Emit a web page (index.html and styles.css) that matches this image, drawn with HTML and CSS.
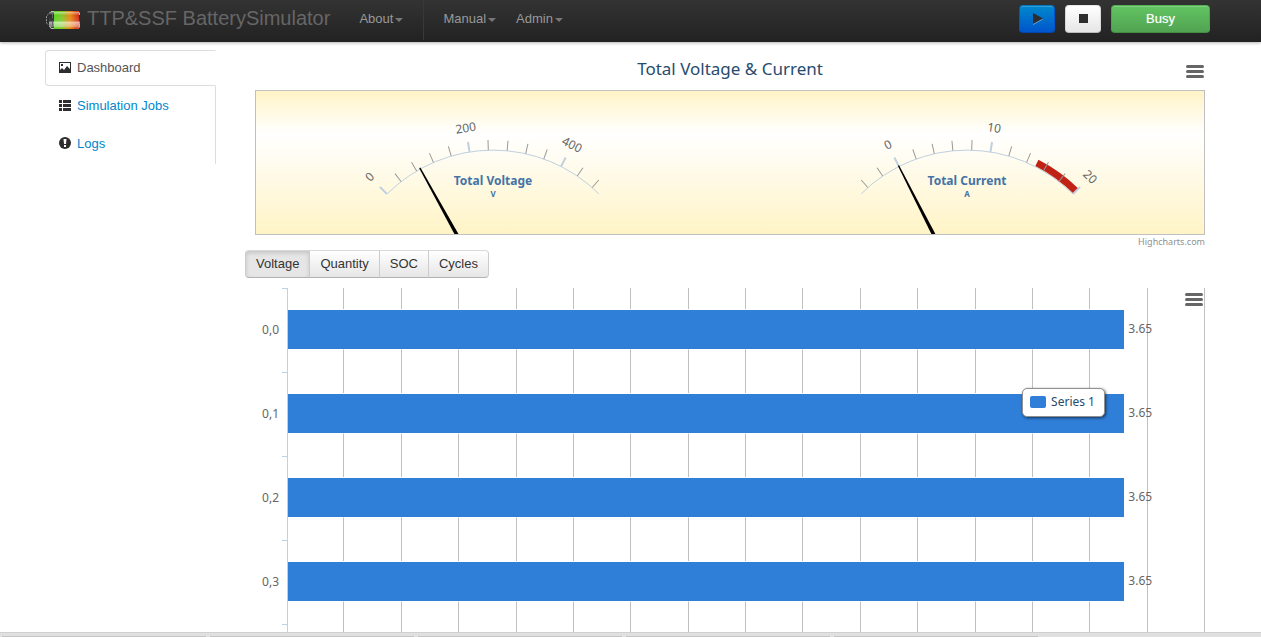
FILE: index.html
```html
<!DOCTYPE html>
<html lang="en">
<head>
<meta charset="utf-8">
<title>TTP&amp;SSF BatterySimulator</title>
<link rel="stylesheet" href="styles.css">
</head>
<body>
<header class="navbar">
  <a class="brand" href="#">
    <svg class="battery" width="36" height="22" viewBox="0 0 36 22" aria-hidden="true">
      <defs>
        <linearGradient id="charge"><stop offset="0" stop-color="#58d322"/><stop offset=".3" stop-color="#7fc928"/><stop offset=".65" stop-color="#e88a17"/><stop offset="1" stop-color="#d32a18"/></linearGradient>
        <linearGradient id="gloss" x2="0" y2="1"><stop offset="0" stop-color="#fff" stop-opacity=".5"/><stop offset=".2" stop-color="#fff" stop-opacity="0"/><stop offset=".55" stop-color="#fff" stop-opacity=".1"/><stop offset=".65" stop-color="#fff" stop-opacity=".6"/><stop offset=".9" stop-color="#fff" stop-opacity=".4"/><stop offset="1" stop-color="#fff" stop-opacity="0"/></linearGradient>
      </defs>
      <rect x="4" y="2" width="31" height="18" rx="3" fill="#292929"/>
      <rect x="9" y="2" width="25" height="18" fill="url(#charge)"/>
      <rect x="4" y="3" width="31" height="16" rx="2" fill="url(#gloss)"/>
      <path d="M3.500 5L1.500 7V14L3.500 16" fill="none" stroke="#999" stroke-dasharray="2 1"/>
      <path d="M9 2.500H6L4.500 4M4.500 17L6 19.500H9M33 2.500L34.500 4V6M34.500 15V18L33 19.500" fill="none" stroke="#bbb"/>
      <path d="M7.500 5V9M7.500 12V17" stroke="#666"/>
    </svg>
    <span>TTP&amp;SSF BatterySimulator</span>
  </a>
  <nav class="menu">
    <a href="#">About<i class="caret"></i></a>
    <span class="divider"></span>
    <a href="#">Manual<i class="caret"></i></a>
    <a href="#">Admin<i class="caret"></i></a>
  </nav>
  <div class="actions">
    <button class="btn play" aria-label="Play"><svg width="12" height="14" viewBox="0 0 12 14"><path d="M2 2L12 7.500L2 13Z" fill="#62a5e8"/><path d="M2 1L12 6.500L2 12Z" fill="#2d2d2d"/></svg></button>
    <button class="btn stop" aria-label="Stop"><svg width="10" height="10"><path d="M1 0H10V9H1Z" fill="#2d2d2d"/></svg></button>
    <button class="btn busy">Busy</button>
  </div>
</header>

<div class="page">
  <nav class="tabs">
    <a class="active" href="#"><svg width="14" height="14" viewBox="0 0 14 14"><path fill="#2d2d2d" fill-rule="evenodd" d="M1 1H13V12H1ZM2 2V9L4 7L6 9L9 5L12 8V2ZM3 3H5V5H3Z"/></svg>Dashboard</a>
    <a href="#"><svg width="14" height="14" viewBox="0 0 14 14"><path fill="#2d2d2d" d="M1 1H4V4H1ZM5 1H13V4H5ZM1 5H4V8H1ZM5 5H13V8H5ZM1 9H4V12H1ZM5 9H13V12H5Z"/></svg>Simulation Jobs</a>
    <a href="#"><svg width="14" height="14" viewBox="0 0 14 14"><circle cx="7" cy="6" r="6" fill="#2d2d2d"/><path fill="#fff" d="M5.500 2H8.500L8 7H6ZM6 8H8V10H6Z"/></svg>Logs</a>
  </nav>

  <main class="content">
    <section class="gauges">
      <div class="heading">
        <h1>Total Voltage &amp; Current</h1>
        <button class="export" aria-label="Chart menu"><i></i><i></i><i></i></button>
      </div>
      <div class="pane">
        <svg class="gauge" width="300" height="143" viewBox="-150 -209 300 143" role="img" aria-label="Total Voltage gauge">
          <path class="arc" d="M-106 -106A150 150 0 0 1 106 -106"/>
          <g class="minor">
            <path transform="rotate(-37.8)" d="M0 -150V-160"/><path transform="rotate(-30.6)" d="M0 -150V-160"/><path transform="rotate(-23.4)" d="M0 -150V-160"/><path transform="rotate(-16.2)" d="M0 -150V-160"/><path transform="rotate(-1.8)" d="M0 -150V-160"/><path transform="rotate(5.4)" d="M0 -150V-160"/><path transform="rotate(12.6)" d="M0 -150V-160"/><path transform="rotate(19.8)" d="M0 -150V-160"/><path transform="rotate(34.2)" d="M0 -150V-160"/><path transform="rotate(41.4)" d="M0 -150V-160"/>
          </g>
          <g class="major">
            <path transform="rotate(-45)" d="M0 -150V-160"/><path transform="rotate(-9)" d="M0 -150V-160"/><path transform="rotate(27)" d="M0 -150V-160"/>
          </g>
          <g class="scale">
            <text transform="rotate(-45)" y="-170">0</text><text transform="rotate(-9)" y="-170">200</text><text transform="rotate(27)" y="-170">400</text>
          </g>
          <text class="name" y="-115">Total Voltage</text>
          <text class="unit" y="-103">V</text>
          <path transform="rotate(-29)" d="M-2 0L-2 -60L-.7 -151H.7L2 -60V0Z"/>
        </svg>
        <svg class="gauge" width="300" height="143" viewBox="-150 -209 300 143" role="img" aria-label="Total Current gauge">
          <path class="arc" d="M-106 -106A150 150 0 0 1 106 -106"/>
          <path class="band" d="M69.900 -137.200A154 154 0 0 1 108.900 -108.900"/>
          <g class="minor">
            <path transform="rotate(-41.4)" d="M0 -150V-160"/><path transform="rotate(-34.2)" d="M0 -150V-160"/><path transform="rotate(-19.8)" d="M0 -150V-160"/><path transform="rotate(-12.6)" d="M0 -150V-160"/><path transform="rotate(-5.4)" d="M0 -150V-160"/><path transform="rotate(1.8)" d="M0 -150V-160"/><path transform="rotate(16.2)" d="M0 -150V-160"/><path transform="rotate(23.4)" d="M0 -150V-160"/><path transform="rotate(30.6)" d="M0 -150V-160"/><path transform="rotate(37.8)" d="M0 -150V-160"/>
          </g>
          <g class="major">
            <path transform="rotate(-27)" d="M0 -150V-160"/><path transform="rotate(9)" d="M0 -150V-160"/><path transform="rotate(45)" d="M0 -150V-160"/>
          </g>
          <g class="scale">
            <text transform="rotate(-27)" y="-170">0</text><text transform="rotate(9)" y="-170">10</text><text transform="rotate(45)" y="-170">20</text>
          </g>
          <text class="name" y="-115">Total Current</text>
          <text class="unit" y="-103">A</text>
          <path transform="rotate(-27)" d="M-2 0L-2 -60L-.7 -151H.7L2 -60V0Z"/>
        </svg>
      </div>
      <a class="credits" href="#">Highcharts.com</a>
    </section>

    <div class="btn-group">
      <button class="on">Voltage</button><button>Quantity</button><button>SOC</button><button>Cycles</button>
    </div>

    <section class="bars">
      <div class="grid"><i></i><i></i><i></i><i></i><i></i><i></i><i></i><i></i><i></i><i></i><i></i><i></i><i></i><i></i><i></i><i></i></div>
      <div class="row"><span class="cat">0,0</span><div class="plot"><div class="bar"></div><span>3.65</span></div></div>
      <div class="row"><span class="cat">0,1</span><div class="plot"><div class="bar"></div><span>3.65</span></div></div>
      <div class="row"><span class="cat">0,2</span><div class="plot"><div class="bar"></div><span>3.65</span></div></div>
      <div class="row"><span class="cat">0,3</span><div class="plot"><div class="bar"></div><span>3.65</span></div></div>
      <div class="row tail"><span class="cat"></span><div class="plot"></div></div>
      <div class="legend"><i></i>Series 1</div>
      <button class="export" aria-label="Chart menu"><i></i><i></i><i></i></button>
    </section>
  </main>
</div>
<footer class="dock"><i></i><i></i><i></i><i></i><i></i></footer>
</body>
</html>
```

FILE: styles.css
```css
* { box-sizing: border-box; }
body {
  margin: 0;
  height: 100vh;
  display: flex;
  flex-direction: column;
  overflow: hidden;
  background: #fff;
  color: #333;
  font: 13px/20px "Liberation Sans", Arial, sans-serif;
}
a { text-decoration: none; }
svg { display: block; flex: none; }
button { font: inherit; cursor: pointer; }

.navbar {
  flex: none;
  display: flex;
  height: 42px;
  padding: 0 51px 0 45px;
  background: linear-gradient(#333, #222);
  box-shadow: 0 1px 3px rgba(0, 0, 0, .3);
}
.brand {
  display: flex;
  gap: 6px;
  height: 36px;
  align-items: center;
  color: #666;
  font-size: 20px;
}
.battery { margin-top: 3px; }
.menu { display: flex; height: 40px; margin-left: 19px; }
.menu a {
  display: flex;
  align-items: center;
  gap: 2px;
  height: 38px;
  padding: 0 10px;
  color: #999;
}
.caret {
  border: 4px solid transparent;
  border-top-color: #777;
  border-bottom: 0;
  margin-top: 1px;
}
.divider { width: 1px; margin: 0 9px 0 10px; background: #383838; }
.actions { display: flex; gap: 10px; margin-left: auto; padding-top: 5px; }
.btn {
  display: flex;
  align-items: center;
  justify-content: center;
  width: 36px;
  height: 28px;
  padding: 0;
  border: 1px solid;
  border-radius: 4px;
  box-shadow: inset 0 1px 0 rgba(255, 255, 255, .2);
}
.play { background: linear-gradient(#08c, #05c); border-color: #0077c4 #0055cc #0047b0; }
.stop { background: linear-gradient(#fff, #e6e6e6); border-color: #e8e8e8 #d8d8d8 #bbb; }
.busy {
  width: 99px;
  background: linear-gradient(#62c462, #51a351);
  border-color: #55b055 #51a351 #458d45;
  color: #fff;
  text-shadow: 0 0 1px rgba(255, 255, 255, .5);
}

.page { flex: 1; min-height: 0; display: flex; gap: 29px; padding: 8px 45px 0; }
.tabs { flex: none; width: 171px; }
.tabs a {
  display: flex;
  align-items: center;
  gap: 5px;
  height: 36px;
  padding: 0 0 0 13px;
  border-right: 1px solid #ddd;
  color: #08c;
}
.tabs a + a { height: 38px; padding-top: 2px; }
.tabs a + a + a { height: 40px; padding-bottom: 3px; }
.tabs .active {
  border: 1px solid #ddd;
  border-right-color: transparent;
  border-radius: 4px 0 0 4px;
  padding-left: 12px;
  color: #555;
}

.content { flex: 1; min-width: 0; display: flex; flex-direction: column; }
.gauges {
  flex: none;
  display: flex;
  flex-direction: column;
  padding: 0 11px 0 10px;
  font-family: "Noto Sans", sans-serif;
}
.heading { display: grid; height: 40px; align-items: center; }
.heading > * { grid-area: 1 / 1; }
.heading h1 {
  margin: 0;
  padding-bottom: 2px;
  color: #274b6d;
  font-size: 17px;
  font-weight: 400;
  text-align: center;
}
.heading .export { margin-top: 2px; }
.export {
  display: flex;
  flex-direction: column;
  gap: 2px;
  justify-self: end;
  width: 20px;
  padding: 3px 1px;
  border: 0;
  background: none;
}
.export i { height: 3px; border-radius: 2px; background: #666; }
.pane {
  display: flex;
  height: 145px;
  border: 1px solid #c0c0c0;
  background: linear-gradient(#fff4c6, #fff 30%, #fff4c6);
}
.gauge { flex: 1; min-width: 0; }
.arc { fill: none; stroke: #c0d0e0; }
.minor { stroke: #999; }
.major { stroke: #c0d0e0; stroke-width: 2; }
.band { fill: none; stroke: #c02316; stroke-width: 7; }
.gauge text { text-anchor: middle; }
.scale { fill: #666; font-size: 12px; }
.name { fill: #4572a7; font-size: 12px; font-weight: 700; }
.unit { fill: #4572a7; font-size: 8px; font-weight: 700; }
.credits { align-self: flex-end; color: #909090; font-size: 9px; line-height: 14px; }

.btn-group { flex: none; display: flex; height: 29px; margin-top: 1px; }
.btn-group button {
  height: 28px;
  padding: 0 10px;
  border: 1px solid #ccc;
  border-color: #d9d9d9 #ccc #b3b3b3;
  background: linear-gradient(#fff, #e6e6e6);
  color: #333;
}
.btn-group button + button { margin-left: -1px; }
.btn-group button:first-child { border-radius: 4px 0 0 4px; }
.btn-group button:last-child { border-radius: 0 4px 4px 0; }
.btn-group .on { background: #e6e6e6; box-shadow: inset 0 2px 4px rgba(0, 0, 0, .15); }

.bars {
  position: relative;
  flex: 1;
  min-height: 0;
  display: flex;
  flex-direction: column;
  margin-top: 9px;
  padding-right: 11px;
  overflow: hidden;
  color: #666;
  font: 12px/16px "Noto Sans", sans-serif;
}
.grid { position: absolute; inset: 0 11px 0 42px; display: flex; }
.grid i { flex: 1; border-right: 1px solid #c0c0c0; }
.row { position: relative; flex: none; display: flex; height: 84px; }
.cat {
  display: flex;
  align-items: center;
  justify-content: flex-end;
  width: 42px;
  padding-right: 8px;
  background: linear-gradient(#c0d0e0, #c0d0e0) right top / 5px 1px no-repeat;
}
.plot {
  flex: 1;
  display: flex;
  align-items: center;
  gap: 4px;
  padding-bottom: 2px;
  border-left: 1px solid #c0d0e0;
}
.bar { width: 91.2%; height: 39px; background: #2f7ed8; box-shadow: 0 0 0 1px #fff; clip-path: inset(-1px -1px -1px 0); }
.tail { flex: 1; }
.legend {
  position: absolute;
  top: 100px;
  right: 111px;
  display: flex;
  align-items: center;
  gap: 5px;
  height: 29px;
  padding: 0 9px 2px 7px;
  border: 1px solid #909090;
  border-radius: 5px;
  background: #fff;
  box-shadow: 1px 1px 3px rgba(0, 0, 0, .6);
  color: #274b6d;
}
.legend i { width: 16px; height: 12px; border-radius: 2px; background: #2f7ed8; }
.bars .export { position: absolute; top: 2px; right: 12px; }

.dock {
  flex: none;
  display: flex;
  gap: 4px;
  height: 5px;
  padding: 3px 0 0 2px;
  border-top: 1px solid #d0d0d0;
  background: #e0e0e0;
}
.dock i { width: 204px; border-top: 1px solid #c4c4c4; background: linear-gradient(#ccc, #ccc) 190px 0 / 1px 1px no-repeat #fff; }
```
